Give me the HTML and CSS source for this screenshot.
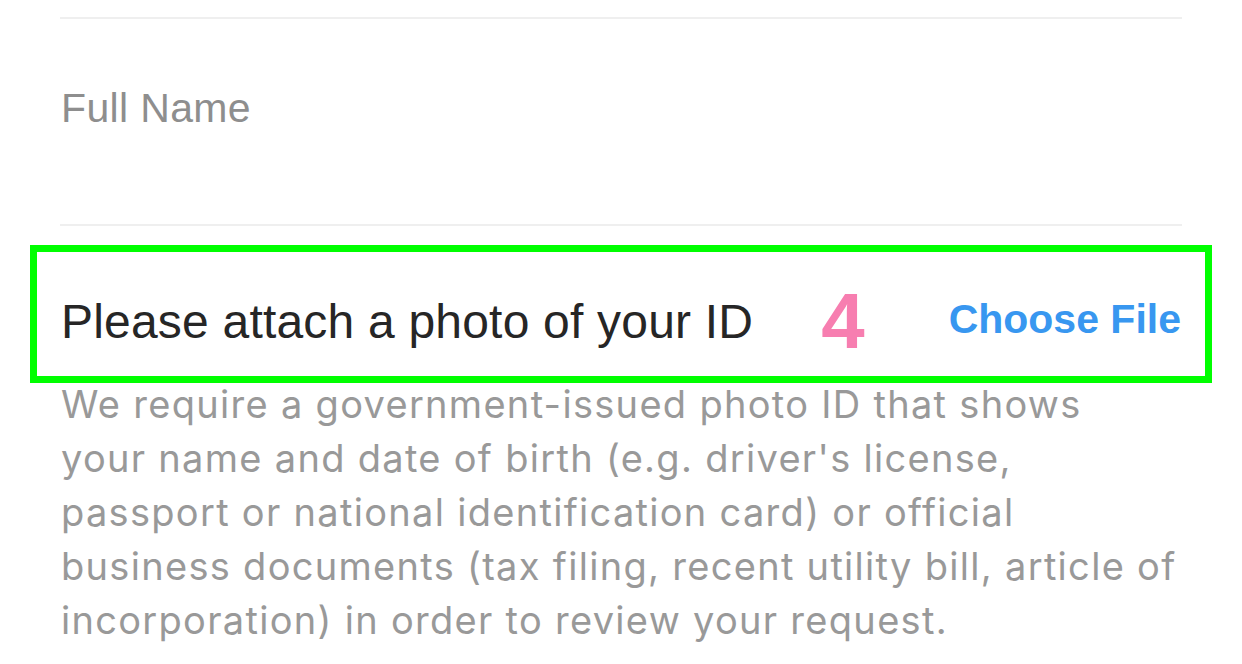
FILE: index.html
```html
<!DOCTYPE html>
<html lang="en">
<head>
    <meta charset="UTF-8">
    <meta name="viewport" content="width=device-width, initial-scale=1.0">
    <title>Verify Identity</title>
    <link rel="stylesheet" href="styles.css">
</head>
<body>
    <div class="form">
        <div class="field">
            <div class="field-label">Full Name</div>
        </div>

        <div class="file-row">
            <div class="file-label">Please attach a photo of your ID</div>
            <div class="step">4</div>
            <a href="#" class="choose-file">Choose File</a>
        </div>

        <p class="hint">
            We require a government-issued photo ID that shows<br>
            your name and date of birth (e.g. driver's license,<br>
            passport or national identification card) or official<br>
            business documents (tax filing, recent utility bill, article of<br>
            incorporation) in order to review your request.
        </p>
    </div>
</body>
</html>
```

FILE: styles.css
```css
* {
    margin: 0;
    padding: 0;
    box-sizing: border-box;
}

body {
    font-family: 'Liberation Sans', Arial, sans-serif;
    background: #fff;
    color: #262626;
}

.form {
    padding: 17px 60px 0;
}

.field {
    border-top: 2px solid #efefef;
    border-bottom: 2px solid #efefef;
    padding: 69px 1px 95px;
}

.field-label {
    font-size: 41px;
    line-height: 1;
    letter-spacing: 0.35px;
    color: #8e8e8e;
}

.file-row {
    display: flex;
    align-items: flex-start;
    height: 78px;
    margin-top: 49px;
    padding: 0 1px;
    outline: 7px solid #00ff00;
    outline-offset: 23px;
}

.file-label {
    flex: 1;
    font-size: 48px;
    line-height: 1;
    letter-spacing: 0.2px;
    margin-top: 23px;
}

.step {
    font-size: 78px;
    font-weight: bold;
    line-height: 1;
    color: #f77eb0;
    margin-top: 7px;
    margin-right: 84px;
}

.choose-file {
    font-size: 41px;
    font-weight: bold;
    line-height: 1;
    color: #3897f0;
    text-decoration: none;
    margin-top: 24px;
}

.hint {
    margin-top: 24px;
    padding: 0 1px;
    font-family: Inter, 'Liberation Sans', sans-serif;
    font-size: 38px;
    line-height: 54px;
    letter-spacing: 1.3px;
    white-space: nowrap;
    color: #999;
}
```
